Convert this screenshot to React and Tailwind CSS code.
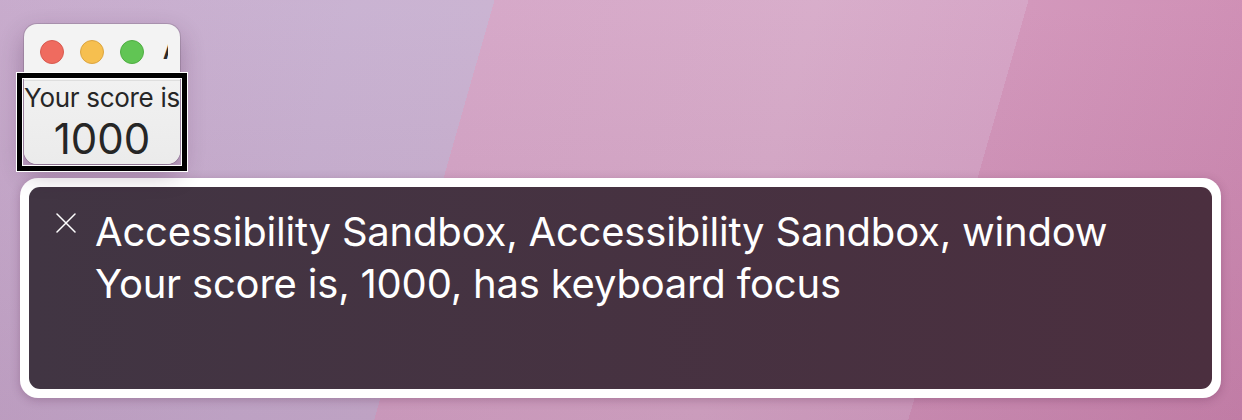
import React from 'react';

const Light = ({ color, edge }) => (
  <span className={`w-6 h-6 rounded-full border ${color} ${edge}`} />
);

const ScoreWindow = () => (
  <div className="relative ml-1 w-[156px] h-[140px] rounded-[13px] bg-[#f3f3f3] shadow-[0_0_0_1px_rgba(0,0,0,0.12),0_10px_24px_rgba(60,20,60,0.3)]">
    <div className="h-14 flex items-center pl-4 gap-4 overflow-hidden">
      <Light color="bg-[#ef6b5f]" edge="border-[#d85a4f]" />
      <Light color="bg-[#f6bf4f]" edge="border-[#dca540]" />
      <Light color="bg-[#61c554]" edge="border-[#4fae42]" />
      <span className="ml-[3px] w-[5px] overflow-hidden text-[20px] font-bold leading-none text-[#2a2a2a]">A</span>
    </div>
    <div className="h-[84px] rounded-b-[13px] border-t border-[#dedede] bg-gradient-to-b from-[#f1f1f1] to-[#ebebeb] text-center text-[#262626]">
      <div className="pt-[2px] text-[26px] leading-[30px] tracking-[-0.3px]">Your score is</div>
      <div className="mt-[3px] text-[42px] leading-[46px]">1000</div>
    </div>
    {/* keyboard focus highlight */}
    <div className="absolute left-[-8px] right-[-8px] top-[48px] bottom-[-8px] border-[1.5px] border-white">
      <div className="h-full border-[5px] border-black">
        <div className="h-full border-[1.5px] border-white" />
      </div>
    </div>
  </div>
);

export default function App() {
  return (
    <div
      className="w-[1242px] h-[420px] overflow-hidden pt-6 pl-5 font-['Inter',_'Noto_Sans',_sans-serif] bg-[image:linear-gradient(180deg,rgba(255,255,255,0.03)_0%,rgba(90,20,70,0.1)_100%),linear-gradient(106deg,#c6a9cb_0%,#c8b1d1_26%,#c9b2d1_36.3%,#d5a6c7_36.3%,#d7abc9_60%,#d5a3c5_75.5%,#d295ba_75.5%,#cc88b0_100%)]"
    >
      <ScoreWindow />
      <div className="mt-[14px] w-[1201px] h-[220px] rounded-[18px] bg-white p-[9px] shadow-[0_2px_10px_rgba(70,20,60,0.25)]">
        <div className="h-full rounded-[11px] bg-gradient-to-r from-[#413543] to-[#4b2f3f] flex items-start pl-[27px] pt-[19px]">
          <svg className="mt-[7px] w-5 h-5 shrink-0" viewBox="0 0 20 20" fill="none" stroke="white" strokeWidth="1.5" strokeLinecap="round">
            <path d="M1 1L19 19M19 1L1 19" />
          </svg>
          <div className="ml-[19px] text-white text-[40px] leading-[52px] tracking-[-0.2px]">
            <div>Accessibility Sandbox, Accessibility Sandbox, window</div>
            <div>Your score is, 1000, has keyboard focus</div>
          </div>
        </div>
      </div>
    </div>
  );
}
